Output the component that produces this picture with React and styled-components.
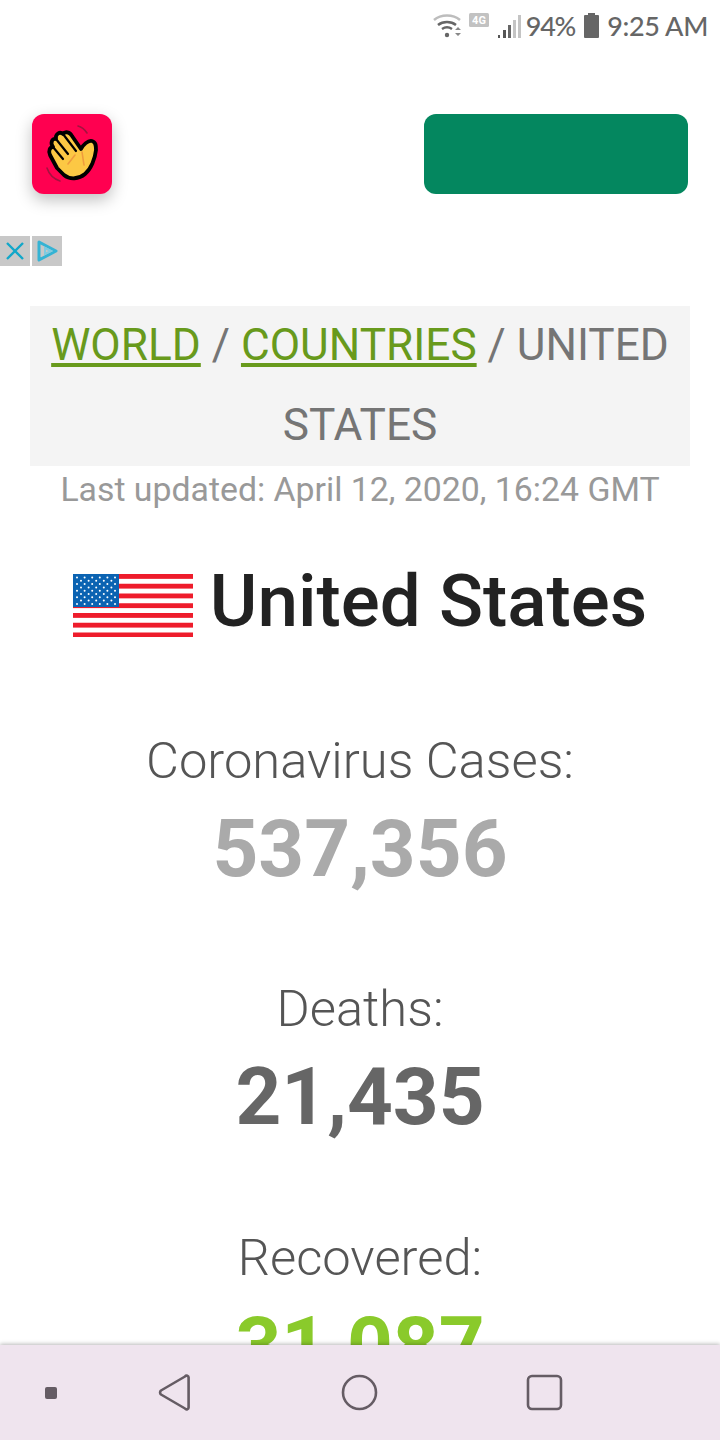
import React from 'react'
import styled, { createGlobalStyle } from 'styled-components'

const Global = createGlobalStyle`
  html, body { margin: 0; padding: 0; background: #fff; }
  body { font-family: Roboto, "Liberation Sans", sans-serif; width: 720px; height: 1440px; overflow: hidden; }
`

const Page = styled.div`
  position: relative;
  width: 720px;
  height: 1440px;
  overflow: hidden;
`

const StatusBar = styled.div`
  height: 50px;
  display: flex;
  align-items: center;
  justify-content: flex-end;
  padding-right: 12px;
  color: #666;
  font-family: Lato, sans-serif;
  font-size: 27px;
  font-weight: 500;
  svg { display: block; }
`

const StatusText = styled.span`
  margin-left: ${p => p.$gap || 0}px;
  letter-spacing: ${p => p.$spacing || 0}px;
`

const Header = styled.div`
  display: flex;
  justify-content: space-between;
  padding: 64px 32px 0;
`

const AppIcon = styled.div`
  width: 80px;
  height: 80px;
  border-radius: 12px;
  background: #ff0050;
  box-shadow: 0 6px 16px rgba(0, 0, 0, 0.25);
`

const GreenButton = styled.div`
  width: 264px;
  height: 80px;
  border-radius: 12px;
  background: #04875f;
`

const AdBadges = styled.div`
  display: flex;
  gap: 2px;
  margin-top: 42px;
`

const AdBadge = styled.div`
  width: 30px;
  height: 30px;
  background: #c8c8c8;
  display: flex;
  align-items: center;
  justify-content: center;
`

const Breadcrumb = styled.div`
  display: flow-root;
  margin: 40px 30px 0;
  background: #f4f4f4;
  padding: 0 10px;
  text-align: center;
  color: #757575;
  font-size: 44.2px;
  line-height: 80px;
  height: 160px;
  a { color: #689a1c; text-decoration: underline; text-decoration-thickness: 4px; text-underline-offset: 3px; }
`

const Crumbs = styled.div`
  margin-top: -1px;
`

const Updated = styled.div`
  text-align: center;
  color: #999;
  font-size: 33.8px;
  line-height: 48px;
`

const Title = styled.div`
  display: flex;
  align-items: center;
  justify-content: center;
  gap: 17px;
  margin-top: 42px;
  color: #222;
  font-size: 72.8px;
  font-weight: 500;
  line-height: 90px;
`

const FlagWrap = styled.div`
  margin-top: 9px;
`

const Stat = styled.div`
  text-align: center;
  margin-top: ${p => p.$top}px;
`

const StatLabel = styled.div`
  color: #555;
  font-size: 50.7px;
  font-weight: 300;
  line-height: 56px;
`

const StatValue = styled.div`
  color: ${p => p.$color};
  font-size: 80px;
  font-weight: 700;
  line-height: 92px;
  margin-top: 14px;
`

const NavBar = styled.div`
  position: absolute;
  left: 0;
  right: 0;
  bottom: 0;
  height: 95px;
  display: flex;
  align-items: center;
  padding-left: 45px;
  background: #efe4ee;
  box-shadow: 0 -1px 4px rgba(0, 0, 0, 0.28);
`

const NavDot = styled.div`
  width: 12px;
  height: 12px;
  border-radius: 2px;
  background: #655c64;
`

const NavIcon = styled.svg`
  display: block;
  margin-left: ${p => p.$gap}px;
  fill: none;
  stroke: #655c64;
  stroke-width: 2.6;
`

function HandIcon() {
  return (
    <svg width="80" height="80" viewBox="0 0 80 80" style={{ display: 'block' }}>
      <path d="M46 12c4 1 7 4 9 7M15 54c2 6 7 11 13 13" fill="none" stroke="#a3123f" strokeWidth="1.6" strokeLinecap="round" />
      <path
        d="M25 54L18 41C16 37 18 33 21 33C18 29 20 24 24 25C23 20 28 17 31 20C33 17 38 18 40 22L49 35C51 31 56 26 60 27C64 28 64 32 64 36C63 45 59 55 53 60C47 65 38 66 32 61Z"
        fill="#fcc844"
        stroke="#000"
        strokeWidth="3.8"
        strokeLinejoin="round"
      />
      <path d="M21 33l10 12M24 25l12 15M31 20l13 17" fill="none" stroke="#000" strokeWidth="2.2" strokeLinecap="round" />
      <path d="M36 50l7-9M50 38l2 13" fill="none" stroke="#ef9c3d" strokeWidth="1.6" strokeLinecap="round" />
    </svg>
  )
}

function UsFlag() {
  const stars = []
  for (let r = 0; r < 9; r++) {
    const count = r % 2 ? 5 : 6
    for (let c = 0; c < count; c++) {
      stars.push(<circle key={`${r}-${c}`} cx={(r % 2 ? 8 : 4) + c * 7.6} cy={3.5 + r * 3.3} r="1" fill="#fff" />)
    }
  }
  const stripes = []
  for (let i = 0; i < 7; i++) {
    stripes.push(<rect key={i} x="0" y={i * 9.75} width="120" height="4.85" fill="#ee1c2b" />)
  }
  return (
    <svg width="120" height="63" viewBox="0 0 120 63" style={{ display: 'block' }}>
      <rect width="120" height="63" fill="#fff" />
      {stripes}
      <rect width="46" height="33" fill="#0b63b2" />
      {stars}
    </svg>
  )
}

function App() {
  return (
    <Page>
      <Global />
      <StatusBar>
        <svg width="28" height="26" viewBox="0 0 28 26">
          <path d="M1 8c7-6 19-6 26 0" fill="none" stroke="#bdbdbd" strokeWidth="2.5" />
          <path d="M5 13c5-4 13-4 18 0" fill="none" stroke="#666" strokeWidth="2.5" />
          <path d="M9 17c3-2 7-2 10 0" fill="none" stroke="#666" strokeWidth="2.5" />
          <circle cx="14" cy="23" r="2.2" fill="#666" />
          <path d="M22 18l3-3 3 3zM22 21l3 3 3-3z" fill="#888" />
        </svg>
        <svg width="20" height="14" viewBox="0 0 20 14" style={{ margin: '-10px 0 0 8px' }}>
          <rect width="20" height="14" rx="1.5" fill="#c2c2c2" />
          <text x="10" y="11" fontSize="11" fontWeight="700" textAnchor="middle" fill="#fff" fontFamily="Roboto">4G</text>
        </svg>
        <svg width="24" height="24" viewBox="0 0 24 24" style={{ margin: '2px 0 0 8px' }}>
          <path d="M1 24h2v-3H1zM6 24h3v-8H6z" fill="#555" />
          <path d="M11 24h3V11h-3z" fill="#666" />
          <path d="M16 24h3V6h-3zM21 24h3V1h-3z" fill="#c4c4c4" />
        </svg>
        <StatusText $gap={5} $spacing={-1.2}>94%</StatusText>
        <svg width="15" height="25" viewBox="0 0 15 25" style={{ marginLeft: 9 }}>
          <path d="M4 0h7v2h3a1 1 0 0 1 1 1v21a1 1 0 0 1-1 1H1a1 1 0 0 1-1-1V3a1 1 0 0 1 1-1h3z" fill="#666" />
        </svg>
        <StatusText $gap={8} $spacing={-0.35}>9:25 AM</StatusText>
      </StatusBar>

      <Header>
        <AppIcon><HandIcon /></AppIcon>
        <GreenButton />
      </Header>

      <AdBadges>
        <AdBadge>
          <svg width="20" height="20" viewBox="0 0 20 20">
            <path d="M2 2l16 16M18 2L2 18" stroke="#12a7c9" strokeWidth="2.4" />
          </svg>
        </AdBadge>
        <AdBadge>
          <svg width="22" height="22" viewBox="0 0 22 22">
            <path d="M3 2l17 9-17 9z" fill="none" stroke="#35b3d4" strokeWidth="3" strokeLinejoin="round" />
            <path d="M9 8l6 3-6 3z" fill="none" stroke="#7fcbe0" strokeWidth="2" />
          </svg>
        </AdBadge>
      </AdBadges>

      <Breadcrumb>
        <Crumbs><a>WORLD</a> / <a>COUNTRIES</a> / UNITED STATES</Crumbs>
      </Breadcrumb>
      <Updated>Last updated: April 12, 2020, 16:24 GMT</Updated>

      <Title><FlagWrap><UsFlag /></FlagWrap>United States</Title>

      <Stat $top={87}>
        <StatLabel>Coronavirus Cases:</StatLabel>
        <StatValue $color="#aaa">537,356</StatValue>
      </Stat>
      <Stat $top={86}>
        <StatLabel>Deaths:</StatLabel>
        <StatValue $color="#666">21,435</StatValue>
      </Stat>
      <Stat $top={87}>
        <StatLabel>Recovered:</StatLabel>
        <StatValue $color="#8aca2b">31,087</StatValue>
      </Stat>

      <NavBar>
        <NavDot />
        <NavIcon $gap={101} width="33" height="37" viewBox="0 0 33 37">
          <path d="M27 2.5a2 2 0 0 1 3.6 1.4v29.2a2 2 0 0 1-3.6 1.4L3 20.5a2.6 2.6 0 0 1 0-4z" strokeLinejoin="round" />
        </NavIcon>
        <NavIcon $gap={150} width="37" height="37" viewBox="0 0 37 37">
          <circle cx="18.5" cy="18.5" r="16.5" />
        </NavIcon>
        <NavIcon $gap={148} width="37" height="37" viewBox="0 0 37 37">
          <rect x="2" y="2" width="33" height="33" rx="4" />
        </NavIcon>
      </NavBar>
    </Page>
  )
}

export default App
